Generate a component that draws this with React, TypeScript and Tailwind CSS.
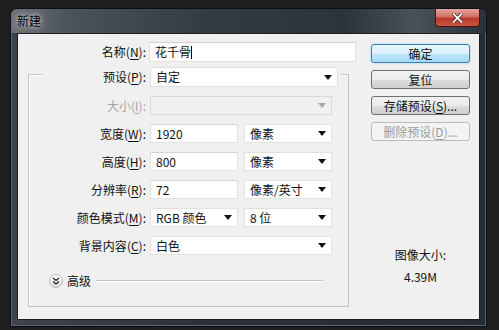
import type { ReactNode } from 'react';

const FONT = "font-['Noto_Sans_CJK_SC','Liberation_Sans',sans-serif]";

function Label({ text, k, disabled, tail = ':' }: { text: string; k: string; disabled?: boolean; tail?: string }) {
  return (
    <span className={`whitespace-nowrap text-[12px] ${disabled ? 'text-[#a3a3a3]' : 'text-[#111]'}`}>
      {text}(<span className="underline underline-offset-[2px]">{k}</span>){tail}
    </span>
  );
}

function Arrow({ disabled }: { disabled?: boolean }) {
  return (
    <svg width="8" height="5" viewBox="0 0 8 5" className="shrink-0">
      <path d="M0 0h8L4 5z" fill={disabled ? '#a8a8a8' : '#111'} />
    </svg>
  );
}

function Dropdown({ value, w, disabled }: { value?: string; w: string; disabled?: boolean }) {
  return (
    <div
      className={`${w} h-[19px] flex items-center justify-between pl-[5px] pr-[5px] border ${
        disabled ? 'bg-[#f0f0f0] border-[#d9d9d9]' : 'bg-white border-[#e1e1e1]'
      }`}
    >
      <span className="text-[12px] leading-none text-[#111]">{value}</span>
      <Arrow disabled={disabled} />
    </div>
  );
}

function Field({ value, w }: { value: string; w: string }) {
  return (
    <div className={`${w} h-[19px] flex items-center pl-[5px] bg-white border border-[#e1e1e1] border-t-[#d4d4d4]`}>
      <span className="text-[12px] leading-none text-[#111]">{value}</span>
    </div>
  );
}

function Row({ label, children }: { label: ReactNode; children: ReactNode }) {
  return (
    <div className="flex items-center h-[19px]">
      <div className="w-[117px] flex justify-end">{label}</div>
      <div className="ml-[4px] flex gap-[6px]">{children}</div>
    </div>
  );
}

function Button({ children, variant = 'normal' }: { children: ReactNode; variant?: 'default' | 'normal' | 'disabled' }) {
  const styles = {
    default:
      'border-[#3c7fb1] bg-[linear-gradient(to_bottom,#eaf6fd_0%,#d9f0fc_50%,#bee6fd_51%,#a7d9f5_100%)] shadow-[0_0_2px_#7fc4ee] text-[#111]',
    normal:
      'border-[#707070] bg-[linear-gradient(to_bottom,#f2f2f2_0%,#ebebeb_50%,#dddddd_51%,#cfcfcf_100%)] text-[#111]',
    disabled: 'border-[#b8bcbf] bg-[#f4f4f4] text-[#9a9a9a]',
  }[variant];
  return (
    <div className={`w-[99px] h-[19px] rounded-[3px] border flex items-center justify-center text-[12px] leading-none ${styles}`}>
      {children}
    </div>
  );
}

export default function App() {
  return (
    <div className={`w-[499px] h-[330px] overflow-hidden bg-[#1e1e1e] pt-[8px] pl-[10px] text-[12px] ${FONT}`}>
      <div className="w-[477px] h-[319px] flex flex-col rounded-t-[7px] border border-[#0c0f12] bg-[linear-gradient(to_right,#3d444c,#2b323a_40%,#252b32)] shadow-[inset_0_0_0_1px_#5a6169]">
        {/* title bar */}
        <div className="h-[24px] flex items-start justify-between rounded-t-[6px] bg-[linear-gradient(to_right,#6b7077_0%,#4c535b_12%,#343b44_40%,#2c333b_70%,#4a5159_85%,#2a3138_100%)]">
          <span className="ml-[6px] mt-[4px] text-[12px] leading-[16px] text-black [text-shadow:0_0_4px_#d8dadc,0_0_8px_#c8cacc]">
            新建
          </span>
          <div className="mr-[6px] w-[45px] h-[18px] rounded-b-[4px] border border-t-0 border-[#4a1212] bg-[linear-gradient(to_bottom,#e4a49c_0%,#d27266_45%,#b93a2c_55%,#c9553f_100%)] flex items-center justify-center">
            <svg width="11" height="10" viewBox="0 0 11 10">
              <path d="M1.5 1l8 8M9.5 1l-8 8" stroke="#3a1010" strokeWidth="3.2" strokeLinecap="square" />
              <path d="M1.5 1l8 8M9.5 1l-8 8" stroke="#fff" strokeWidth="1.8" strokeLinecap="square" />
            </svg>
          </div>
        </div>

        {/* client area */}
        <div className="flex-1 mx-[6px] mb-[6px] border border-[#1a1f24] bg-[#f0f0f0] flex">
          <div className="w-[338px] flex flex-col pt-[8px]">
            <div className="flex items-center h-[20px]">
              <div className="w-[128px] flex justify-end">
                <Label text="名称" k="N" />
              </div>
              <div className="ml-[3px] w-[207px] h-[20px] flex items-center pl-[5px] bg-white border border-[#e1e1e1] border-t-[#cfcfcf]">
                <span className="text-[12px] leading-none text-[#111]">花千骨</span>
                <span className="w-px h-[13px] bg-black" />
              </div>
            </div>

            <fieldset className="ml-[10px] w-[321px] border border-[#c3c3c3] shadow-[inset_1px_1px_0_#fff]">
              <legend className="ml-[13px] pt-[5px] pr-[3px] bg-[#f0f0f0]">
                <div className="flex items-center">
                  <div className="w-[104px] flex justify-end">
                    <Label text="预设" k="P" />
                  </div>
                  <div className="ml-[4px] w-[188px] h-[20px] flex items-center justify-between pl-[5px] pr-[5px] bg-white border border-[#e1e1e1]">
                    <span className="text-[12px] leading-none text-[#111]">自定</span>
                    <Arrow />
                  </div>
                </div>
              </legend>

              <div className="mt-[9px] flex flex-col gap-[9px]">
                <Row label={<Label text="大小" k="I" disabled />}>
                  <Dropdown w="w-[182px]" disabled />
                </Row>
                <Row label={<Label text="宽度" k="W" />}>
                  <Field value="1920" w="w-[88px]" />
                  <Dropdown value="像素" w="w-[88px]" />
                </Row>
                <Row label={<Label text="高度" k="H" />}>
                  <Field value="800" w="w-[88px]" />
                  <Dropdown value="像素" w="w-[88px]" />
                </Row>
                <Row label={<Label text="分辨率" k="R" />}>
                  <Field value="72" w="w-[88px]" />
                  <Dropdown value="像素/英寸" w="w-[88px]" />
                </Row>
                <Row label={<Label text="颜色模式" k="M" />}>
                  <Dropdown value="RGB 颜色" w="w-[88px]" />
                  <Dropdown value="8 位" w="w-[88px]" />
                </Row>
                <Row label={<Label text="背景内容" k="C" />}>
                  <Dropdown value="白色" w="w-[182px]" />
                </Row>
              </div>

              <div className="mt-[19px] mb-[18px] ml-[20px] flex items-center h-[14px]">
                <div className="w-[14px] h-[14px] rounded-full border border-[#b9b9b9] bg-[linear-gradient(to_bottom,#ffffff,#dedede)] flex items-center justify-center">
                  <svg width="8" height="8" viewBox="0 0 8 8">
                    <path d="M1 1l3 2.5L7 1M1 4.5L4 7l3-2.5" stroke="#222" strokeWidth="1.3" fill="none" />
                  </svg>
                </div>
                <span className="ml-[4px] text-[12px] leading-none text-[#111]">高级</span>
                <div className="ml-[5px] w-[227px] h-[2px] border-t border-[#c3c3c3] border-b border-b-white" />
              </div>
            </fieldset>
          </div>

          <div className="ml-[15px] w-[99px] flex flex-col pt-[10px]">
            <div className="flex flex-col gap-[7px]">
              <Button variant="default">确定</Button>
              <Button>复位</Button>
              <Button>
                存储预设(<span className="underline underline-offset-[2px]">S</span>)...
              </Button>
              <Button variant="disabled">
                删除预设(<span className="underline underline-offset-[2px]">D</span>)...
              </Button>
            </div>
            <div className="mt-[106px] flex flex-col items-center gap-[6px] text-[12px] leading-[16px] text-[#111]">
              <span>图像大小:</span>
              <span>4.39M</span>
            </div>
          </div>
        </div>
      </div>
    </div>
  );
}
